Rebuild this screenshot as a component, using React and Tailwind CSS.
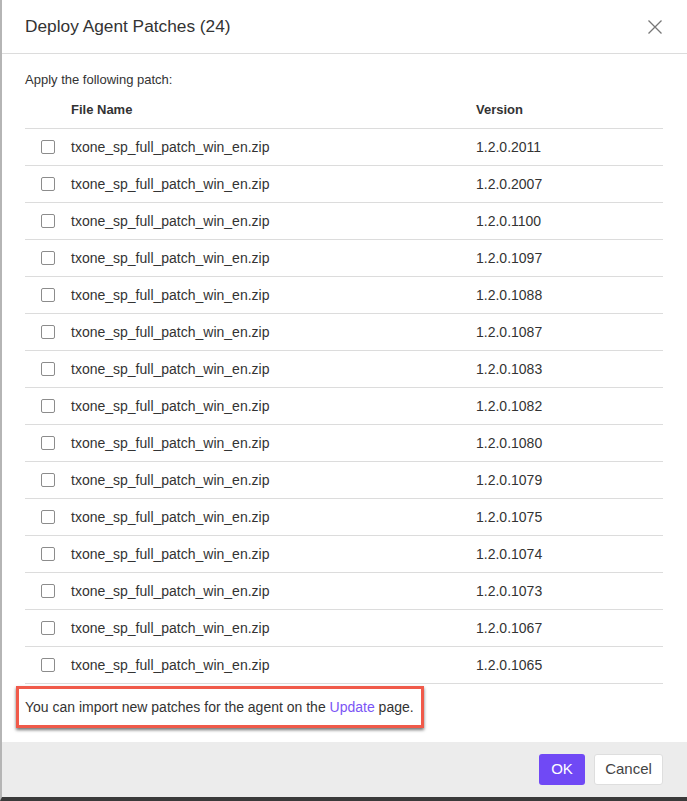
import React from "react";

const versions = ["1.2.0.2011","1.2.0.2007","1.2.0.1100","1.2.0.1097","1.2.0.1088","1.2.0.1087","1.2.0.1083","1.2.0.1082","1.2.0.1080","1.2.0.1079","1.2.0.1075","1.2.0.1074","1.2.0.1073","1.2.0.1067","1.2.0.1065"];

export default function App() {
  return (
    <div className="w-[687px] h-[801px] bg-white flex flex-col border-l-2 border-l-[#b5b5b5] border-b-4 border-b-[#3a3a3a] text-[#333]" style={{ fontFamily: '"Liberation Sans", Arial, sans-serif' }}>
      <div className="h-[54px] shrink-0 flex items-center justify-between pl-[23px] pr-[25px] border-b border-[#dcdcdc]">
        <div className="text-[17.3px] text-[#333]">Deploy Agent Patches (24)</div>
        <svg width="14" height="14" viewBox="0 0 14 14" className="text-[#777]">
          <path d="M0.5 0.5 L13.5 13.5 M13.5 0.5 L0.5 13.5" stroke="currentColor" strokeWidth="1.3" fill="none" />
        </svg>
      </div>
      <div className="flex-1 flex flex-col pl-[23px] pr-[24px] pt-[18px]">
        <div className="text-[13px] leading-[16px] text-[#333]">Apply the following patch:</div>
        <div className="flex h-[41px] items-center pt-[4px] border-b border-[#dcdcdc] text-[13px] font-bold text-[#333]">
          <div className="w-[46px]" />
          <div className="w-[405px]">File Name</div>
          <div>Version</div>
        </div>
        {versions.map((v, i) => (
          <div key={i} className="flex h-[37px] items-center border-b border-[#dcdcdc] text-[14px] text-[#333]">
            <div className="w-[46px] flex pl-[16px]">
              <div className="w-[14px] h-[14px] border border-[#8c8c8c] rounded-[2px] bg-white" />
            </div>
            <div className="w-[405px]">txone_sp_full_patch_win_en.zip</div>
            <div>{v}</div>
          </div>
        ))}
        <div className="mt-[2px] -ml-[9px] w-[408px] h-[42px] border-[3px] border-[#f05a4a] shadow-[0_2px_3px_rgba(0,0,0,0.55)] flex items-center pl-[6px] text-[14px] text-[#333]">
          You can import new patches for the agent on the&nbsp;<span className="text-[#7b55f5]">Update</span>&nbsp;page.
        </div>
      </div>
      <div className="h-[55px] shrink-0 bg-[#ececec] flex items-center justify-end gap-[9px] pr-[24px]">
        <button className="h-[31px] w-[46px] rounded-[3px] bg-[#7049f5] text-white text-[15px]">OK</button>
        <button className="h-[31px] w-[69px] rounded-[3px] bg-white border border-[#dedede] text-[#444] text-[15px]">Cancel</button>
      </div>
    </div>
  );
}
